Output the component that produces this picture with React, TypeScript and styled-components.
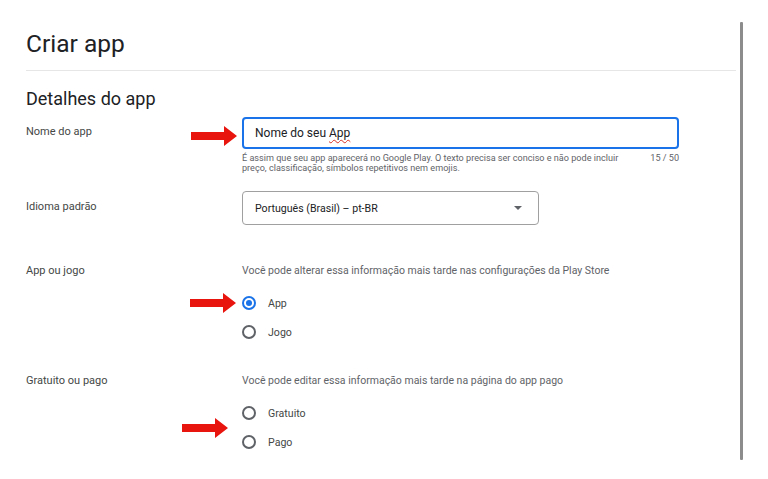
import React from 'react'
import styled, { createGlobalStyle } from 'styled-components'

const GlobalStyle = createGlobalStyle`
  html, body {
    margin: 0;
    padding: 0;
    background: #ffffff;
  }
  body {
    font-family: Roboto, 'Noto Sans', 'Liberation Sans', Arial, sans-serif;
    color: #202124;
  }
`

const Page = styled.div`
  display: flex;
  width: 768px;
  height: 479px;
  overflow: hidden;
  background: #fff;
`

const Content = styled.main`
  width: 710px;
  margin-left: 26px;
  padding-top: 30px;
`

const ScrollTrack = styled.div`
  width: 3px;
  height: 438px;
  margin-top: 22px;
  margin-left: 4px;
  background: #8c8c8c;
  border-radius: 1px;
`

const Title = styled.h1`
  margin: 0;
  font-size: 24.5px;
  line-height: 28px;
  font-weight: 400;
  color: #202124;
`

const Divider = styled.hr`
  margin: 12px 0 0;
  border: none;
  height: 1px;
  background: #e6e6e6;
`

const SectionTitle = styled.h2`
  margin: 17px 0 0;
  font-size: 18px;
  line-height: 22px;
  font-weight: 400;
  color: #202124;
`

const Row = styled.div<{ $mt: number }>`
  display: grid;
  grid-template-columns: 216px 437px;
  margin-top: ${p => p.$mt}px;
`

const Label = styled.div<{ $pt: number }>`
  padding-top: ${p => p.$pt}px;
  font-size: 11px;
  line-height: 16px;
  color: #444746;
`

const Field = styled.div`
  position: relative;
  display: flex;
  flex-direction: column;
`

const TextInput = styled.div`
  box-sizing: border-box;
  height: 32px;
  border: 2px solid #1a73e8;
  border-radius: 4px;
  padding: 0 11px;
  display: flex;
  align-items: center;
  font-size: 12px;
  color: #202124;
`

const Misspelled = styled.span`
  text-decoration: underline wavy #d93025;
  text-decoration-thickness: 1px;
  text-underline-offset: 2px;
`

const HelperRow = styled.div`
  display: flex;
  justify-content: space-between;
  gap: 20px;
  margin-top: 4px;
  font-size: 9.1px;
  line-height: 10px;
  color: #5f6368;
`

const Counter = styled.span`
  white-space: nowrap;
`

const Select = styled.div`
  box-sizing: border-box;
  width: 297px;
  height: 34px;
  border: 1px solid #a0a0a0;
  border-radius: 4px;
  padding: 0 12px;
  display: flex;
  align-items: center;
  justify-content: space-between;
  font-size: 10.6px;
  color: #202124;
`

const Caret = styled.span`
  width: 0;
  height: 0;
  margin-right: 4px;
  border-left: 4.5px solid transparent;
  border-right: 4.5px solid transparent;
  border-top: 4.5px solid #5f6368;
`

const Hint = styled.div`
  font-size: 10.5px;
  line-height: 16px;
  color: #5f6368;
`

const RadioGroup = styled.div`
  position: relative;
  margin-top: 9.5px;
`

const RadioRow = styled.label`
  display: flex;
  align-items: center;
  height: 29px;
  gap: 12px;
  font-size: 10.6px;
  color: #444746;
`

const Circle = styled.span<{ $checked?: boolean }>`
  box-sizing: border-box;
  width: 14px;
  height: 14px;
  border-radius: 50%;
  border: 2px solid ${p => (p.$checked ? '#1a73e8' : '#5f6368')};
  display: flex;
  align-items: center;
  justify-content: center;
  &::after {
    content: '';
    display: ${p => (p.$checked ? 'block' : 'none')};
    width: 6px;
    height: 6px;
    border-radius: 50%;
    background: #1a73e8;
  }
`

const ArrowMark = styled.svg<{ $left: number; $top: number }>`
  position: absolute;
  left: ${p => p.$left}px;
  top: ${p => p.$top}px;
  width: 46px;
  height: 20px;
`

function RedArrow({ left, top }: { left: number; top: number }) {
  return (
    <ArrowMark $left={left} $top={top} viewBox="0 0 46 20">
      <path d="M0 6 H33 V0 L46 10 L33 20 V14 H0 Z" fill="#e8150f" />
    </ArrowMark>
  )
}

function Radio({ label, checked }: { label: string; checked?: boolean }) {
  return (
    <RadioRow>
      <Circle $checked={checked} />
      {label}
    </RadioRow>
  )
}

export default function App() {
  return (
    <>
      <GlobalStyle />
      <Page>
        <Content>
          <Title>Criar app</Title>
          <Divider />
          <SectionTitle>Detalhes do app</SectionTitle>

          <Row $mt={7}>
            <Label $pt={7}>Nome do app</Label>
            <Field>
              <RedArrow left={-51} top={9} />
              <TextInput>
                Nome do seu&nbsp;<Misspelled>App</Misspelled>
              </TextInput>
              <HelperRow>
                <span>
                  É assim que seu app aparecerá no Google Play. O texto precisa ser conciso e não pode incluir
                  <br />
                  preço, classificação, símbolos repetitivos nem emojis.
                </span>
                <Counter>15 / 50</Counter>
              </HelperRow>
            </Field>
          </Row>

          <Row $mt={18}>
            <Label $pt={8}>Idioma padrão</Label>
            <Field>
              <Select>
                <span>Português (Brasil) – pt-BR</span>
                <Caret />
              </Select>
            </Field>
          </Row>

          <Row $mt={38}>
            <Label $pt={0}>App ou jogo</Label>
            <Field>
              <Hint>Você pode alterar essa informação mais tarde nas configurações da Play Store</Hint>
              <RadioGroup>
                <RedArrow left={-52} top={4.5} />
                <Radio label="App" checked />
                <Radio label="Jogo" />
              </RadioGroup>
            </Field>
          </Row>

          <Row $mt={26.5}>
            <Label $pt={0}>Gratuito ou pago</Label>
            <Field>
              <Hint>Você pode editar essa informação mais tarde na página do app pago</Hint>
              <RadioGroup>
                <RedArrow left={-60} top={19.5} />
                <Radio label="Gratuito" />
                <Radio label="Pago" />
              </RadioGroup>
            </Field>
          </Row>
        </Content>
        <ScrollTrack />
      </Page>
    </>
  )
}
